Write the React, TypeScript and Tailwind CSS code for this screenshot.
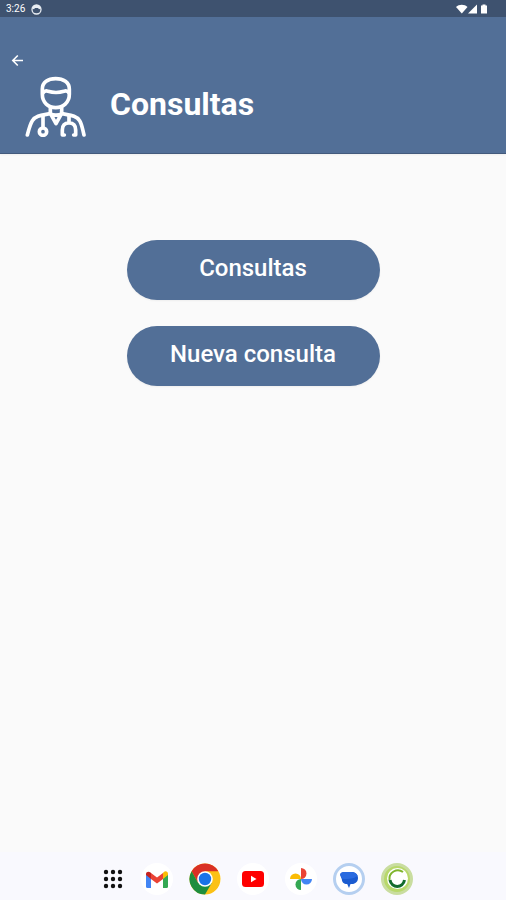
import React from 'react';

interface DockApp {
  name: string;
  icon: React.ReactNode;
}

const DoctorIcon = () => (
  <svg
    viewBox="0 0 183 186"
    className="w-[61px] h-[62px] shrink-0"
    fill="none"
    stroke="white"
    strokeWidth="11"
    strokeLinecap="round"
    strokeLinejoin="round"
    aria-hidden="true"
  >
    {/* Head and hair */}
    <path d="M52 42c0-20 17-31 40-31s41 11 41 31v16c0 25-19 40-41 40S52 83 52 58z" />
    <path d="M54 54c5-7 10-7 15-5 14 4 34 4 48 0 5-2 10-2 15 5" />
    {/* Neck and collar */}
    <path d="M76 98v17l17 31 17-31V98M76 116c8 6 26 6 34 0" />
    {/* Shoulders */}
    <path d="M76 116c-26 5-43 5-54 21-7 11-11 28-15 43M110 116c26 5 43 5 54 21 7 11 9 28 13 43" />
    {/* Stethoscope */}
    <path d="M54 123v34" />
    <circle cx="54" cy="170" r="11" />
    <path d="M132 123v20M118 180h-6v-15c0-14 8-21 20-21s20 7 20 21v15h-6" />
  </svg>
);

const GmailIcon = () => (
  <svg viewBox="0 0 22 17" className="w-[22px] h-[17px]" aria-hidden="true">
    <path fill="#4285f4" d="M0 3v12.500Q0 17 1.500 17H5V7z" />
    <path fill="#34a853" d="M17 7v10h3.500Q22 17 22 15.500V3z" />
    <path fill="#fbbc04" d="M17 2v6l5-4V3c0-2.500-2.500-3.500-4.200-2z" />
    <path fill="#ea4335" d="M5 8V2l6 4.500L17 2v6l-6 4.500z" />
    <path fill="#c5221f" d="M0 3v1l5 4V2L4.200 1.200C2.500 0 0 .8 0 3z" />
  </svg>
);

const ChromeIcon = () => (
  <svg viewBox="0 0 32 32" className="w-8 h-8" aria-hidden="true">
    <circle cx="16" cy="16" r="15.500" fill="#fbc116" />
    <path fill="#d93025" d="M2.600 8.200A15.500 15.500 0 0 1 29.400 8.200H16L9.200 20z" />
    <path fill="#1e8e3e" d="M2.600 8.200A15.500 15.500 0 0 0 16 31.500l6.700-11.600-13.500 0z" />
    <circle cx="16" cy="16" r="7.800" fill="white" />
    <circle cx="16" cy="16" r="6.200" fill="#1a73e8" />
  </svg>
);

const YoutubeIcon = () => (
  <svg viewBox="0 0 22 16" className="w-[22px] h-4" aria-hidden="true">
    <rect width="22" height="16" rx="3.500" fill="#ff0000" />
    <path fill="white" d="M9 4.700v6.600L14.500 8z" />
  </svg>
);

const PhotosIcon = () => (
  <svg viewBox="0 0 24 24" className="w-6 h-6" aria-hidden="true">
    <path fill="#ea4335" d="M12 1a5.500 5.500 0 0 1 0 11z" />
    <path fill="#4285f4" d="M23 12a5.500 5.500 0 0 1-11 0z" />
    <path fill="#34a853" d="M12 23a5.500 5.500 0 0 1 0-11z" />
    <path fill="#fbbc04" d="M1 12a5.500 5.500 0 0 1 11 0z" />
  </svg>
);

const MessagesIcon = () => (
  <svg viewBox="0 0 32 32" className="w-8 h-8" aria-hidden="true">
    <circle cx="16" cy="16" r="14.500" fill="white" stroke="#b5cff0" strokeWidth="3" />
    <path
      fill="#1a5bd0"
      d="M12 9h6.500c4 0 6.500 2.500 6.500 6s-2.500 6-6 6h-1.500L16 25l-1.800-4H14c-3.200 0-5.200-2-5.200-5L7.400 12.500C6.700 10.500 8.500 9 12 9z"
    />
    <path fill="#2a6be0" d="M7.400 12.500C6.700 10.500 8.500 9 12 9h6.500c3 0 5.200 1.500 6 3.800-4 3-10.500 4-15.700 2.700z" />
  </svg>
);

const GreenAppIcon = () => (
  <svg viewBox="0 0 32 32" className="w-8 h-8" fill="none" aria-hidden="true">
    <circle cx="16" cy="16" r="14.500" fill="#b8d86b" stroke="#c9dda0" strokeWidth="3" />
    <circle cx="16.500" cy="15.500" r="10.500" fill="white" />
    <path stroke="#7fb52d" strokeWidth="2" d="M22 9A8.500 8.500 0 0 0 8.500 17" />
    <path stroke="#126b2d" strokeWidth="3" d="M9 17c1.500 8.500 13 8.500 14.500 0" />
  </svg>
);

const dockApps: DockApp[] = [
  { name: 'Gmail', icon: <GmailIcon /> },
  { name: 'Chrome', icon: <ChromeIcon /> },
  { name: 'YouTube', icon: <YoutubeIcon /> },
  { name: 'Fotos', icon: <PhotosIcon /> },
  { name: 'Mensajes', icon: <MessagesIcon /> },
  { name: 'Salud', icon: <GreenAppIcon /> },
];

const StatusBar = () => (
  <div className="flex h-[17px] items-center justify-between bg-[#3e526f] pt-px pl-1.5 pr-4 text-white">
    <div className="flex items-center gap-1.5">
      <span className="text-[10px] leading-4">3:26</span>
      <svg viewBox="0 0 11 11" className="w-[11px] h-[11px]" aria-hidden="true">
        <circle cx="5.500" cy="5.500" r="4.500" fill="none" stroke="#e8edf3" strokeWidth="1.300" />
        <path fill="#e8edf3" d="M1 4.500C1.500 2 3.200 1 5.500 1S9.500 2 10 4.500L8 5.200 7 4H4L3 5.200z" />
      </svg>
    </div>
    <svg viewBox="0 0 34 11" className="w-[34px] h-[11px]" fill="white" aria-hidden="true">
      <path d="M0 3C3 0 8.500 0 11.500 3L5.800 9.500z" />
      <path d="M12 9.500L21 .5v9z" />
      <path d="M25 1.500h1.500v-1h3v1H31v8h-6z" />
    </svg>
  </div>
);

const App: React.FC = () => {
  return (
    <div className="flex min-h-screen flex-col bg-[#fafafa] font-['Roboto',sans-serif]">
      <StatusBar />

      <header className="border-b border-[#435a7c] bg-[#526f97] pt-9 pb-4 text-white shadow-xs">
        <button type="button" aria-label="Volver" className="ml-2.5 block h-4 w-4">
          <svg
            viewBox="0 0 16 16"
            className="h-4 w-4"
            fill="none"
            stroke="currentColor"
            strokeWidth="1.600"
            aria-hidden="true"
          >
            <path d="M13 7.500H3M7.800 2.500l-5 5 5 5" />
          </svg>
        </button>
        <div className="mt-1.5 flex items-center gap-6 pl-[25px]">
          <DoctorIcon />
          <h1 className="pb-1 text-[32px] leading-9 font-bold">Consultas</h1>
        </div>
      </header>

      <main className="flex flex-1 flex-col items-center gap-[26px] pt-[86px]">
        <button type="button" className="h-[60px] w-1/2 rounded-full bg-[#526f97] pb-1 text-2xl font-medium text-white shadow-xs">
          Consultas
        </button>
        <button type="button" className="h-[60px] w-1/2 rounded-full bg-[#526f97] pb-1 text-2xl font-medium text-white shadow-xs">
          Nueva consulta
        </button>
      </main>

      {/* Tablet dock */}
      <nav className="flex h-12 items-center justify-center gap-4 bg-[#f9f9fe] pt-1.5 pl-2">
        <button type="button" aria-label="Aplicaciones" className="flex h-8 w-6 items-center justify-center">
          <svg viewBox="0 0 20 20" className="h-5 w-5" fill="#111111" aria-hidden="true">
            {[3, 10, 17].map((y) =>
              [3, 10, 17].map((x) => <circle key={`${x}-${y}`} cx={x} cy={y} r="2.200" />)
            )}
          </svg>
        </button>
        {dockApps.map((app) => (
          <button
            key={app.name}
            type="button"
            aria-label={app.name}
            className="flex h-8 w-8 items-center justify-center rounded-full bg-white"
          >
            {app.icon}
          </button>
        ))}
      </nav>
    </div>
  );
};

export default App;
